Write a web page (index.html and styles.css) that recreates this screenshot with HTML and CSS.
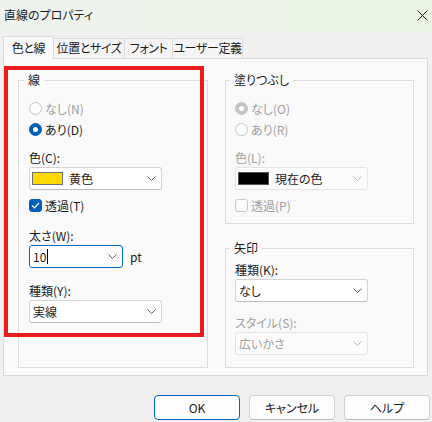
FILE: index.html
```html
<!DOCTYPE html>
<html lang="ja">
<head>
    <meta charset="utf-8">
    <title>直線のプロパティ</title>
    <link rel="stylesheet" href="styles.css">
</head>
<body>
    <div class="titlebar">
        <span class="title">直線のプロパティ</span>
        <span class="close">
            <svg width="11" height="11" viewBox="0 0 11 11"><path d="M0.5 0.5L10.5 10.5M10.5 0.5L0.5 10.5" stroke="#1c1c1c" stroke-width="1" fill="none"/></svg>
        </span>
    </div>

    <div class="tabs">
        <div class="tab active">色と線</div>
        <div class="tab tab-pos">位置とサイズ</div>
        <div class="tab tab-font">フォント</div>
        <div class="tab tab-user">ユーザー定義</div>
    </div>

    <div class="panel">
        <fieldset class="group group-line">
            <legend>線</legend>
            <div class="radio dim"><span class="circle"></span>なし(N)</div>
            <div class="radio"><span class="circle on"></span>あり(D)</div>

            <div class="field-label first">色(C):</div>
            <div class="select">
                <span class="swatch yellow"></span>
                <span class="value">黄色</span>
                <svg class="chevron" width="9" height="5" viewBox="0 0 9 5"><path d="M0.5 0.5L4.5 4.5L8.5 0.5" fill="none" stroke="#5c5c5c"/></svg>
            </div>
            <div class="check"><span class="box on"><svg width="9" height="7" viewBox="0 0 9 7"><path d="M1 3.5L3.4 5.8L8 1" fill="none" stroke="#fff" stroke-width="1.2"/></svg></span>透過(T)</div>

            <div class="field-label gap">太さ(W):</div>
            <div class="width-row">
                <div class="select combo focus">
                    <span class="value">10</span><span class="caret"></span>
                    <svg class="chevron" width="9" height="5" viewBox="0 0 9 5"><path d="M0.5 0.5L4.5 4.5L8.5 0.5" fill="none" stroke="#5c5c5c"/></svg>
                </div>
                <span class="unit">pt</span>
            </div>

            <div class="field-label gap">種類(Y):</div>
            <div class="select">
                <span class="value">実線</span>
                <svg class="chevron" width="9" height="5" viewBox="0 0 9 5"><path d="M0.5 0.5L4.5 4.5L8.5 0.5" fill="none" stroke="#5c5c5c"/></svg>
            </div>
        </fieldset>

        <div class="right-col">
            <fieldset class="group group-fill">
                <legend>塗りつぶし</legend>
                <div class="radio dim"><span class="circle on off"></span>なし(O)</div>
                <div class="radio dim"><span class="circle off"></span>あり(R)</div>

                <div class="field-label first dim">色(L):</div>
                <div class="select disabled">
                    <span class="swatch black"></span>
                    <span class="value dark">現在の色</span>
                    <svg class="chevron" width="9" height="5" viewBox="0 0 9 5"><path d="M0.5 0.5L4.5 4.5L8.5 0.5" fill="none" stroke="#b8b8b8"/></svg>
                </div>
                <div class="check dim"><span class="box off"></span>透過(P)</div>
            </fieldset>

            <fieldset class="group group-arrow">
                <legend>矢印</legend>
                <div class="field-label">種類(K):</div>
                <div class="select">
                    <span class="value">なし</span>
                    <svg class="chevron" width="9" height="5" viewBox="0 0 9 5"><path d="M0.5 0.5L4.5 4.5L8.5 0.5" fill="none" stroke="#5c5c5c"/></svg>
                </div>
                <div class="field-label gap-small dim">スタイル(S):</div>
                <div class="select disabled">
                    <span class="value">広いかさ</span>
                    <svg class="chevron" width="9" height="5" viewBox="0 0 9 5"><path d="M0.5 0.5L4.5 4.5L8.5 0.5" fill="none" stroke="#b8b8b8"/></svg>
                </div>
            </fieldset>
        </div>
    </div>

    <div class="buttons">
        <button class="default">OK</button>
        <button>キャンセル</button>
        <button>ヘルプ</button>
    </div>

    <!-- highlight around the line settings -->
    <div class="highlight"></div>
</body>
</html>
```

FILE: styles.css
```css
* {
    box-sizing: border-box;
}

html,
body {
    margin: 0;
}

body {
    position: relative;
    width: 432px;
    height: 422px;
    overflow: hidden;
    background: #f0f0f0;
    font-family: "Noto Sans CJK JP", sans-serif;
    font-size: 12px;
    font-feature-settings: "palt";
    color: #1b1b1b;
}

.titlebar {
    height: 32px;
    display: flex;
    align-items: center;
    justify-content: space-between;
    padding: 0 4px 3px 4px;
    background: linear-gradient(90deg, #eff2ee, #e9f5e2);
}

.close {
    display: flex;
    margin-top: 1px;
}

/* tab strip */
.tabs {
    display: flex;
    align-items: flex-end;
    height: 26px;
    padding-left: 3px;
}

.tab {
    position: relative;
    height: 20px;
    line-height: 18px;
    text-align: center;
    white-space: nowrap;
    letter-spacing: -0.4px;
    background: #f4f4f4;
    border: 1px solid #dcdcdc;
    border-bottom: none;
    margin-left: -1px;
}

.tab.active {
    margin-left: 0;
    width: 51px;
    height: 23px;
    line-height: 22px;
    margin-bottom: -1px;
    background: #f9f9f9;
    z-index: 1;
}

.tab-pos {
    width: 72px;
}

.tab-font {
    width: 49px;
}

.tab-user {
    width: 71px;
}

.panel {
    height: 318px;
    margin: 0 4px 0 3px;
    background: #f9f9f9;
    border: 1px solid #dadada;
    padding: 13px 0 0 14px;
    display: grid;
    grid-template-columns: 190px 189px;
    column-gap: 17px;
    align-items: start;
}

/* group boxes */
.group {
    margin: 0;
    min-width: 0;
    border: 1px solid #dcdcdc;
    padding: 10px 10px 0;
}

.group legend {
    padding: 0 4px;
    margin-left: -5px;
    line-height: 16px;
}

.group-line {
    height: 296px;
}

.right-col {
    display: flex;
    flex-direction: column;
}

.group-fill {
    height: 152px;
    padding-left: 9px;
}

.group-arrow {
    height: 128px;
    margin-top: 16px;
    padding: 6px 9px 0;
}

.dim {
    color: #a0a0a0;
}

.radio,
.check {
    display: flex;
    align-items: center;
    gap: 3px;
}

.radio {
    height: 21px;
}

.circle {
    width: 13px;
    height: 13px;
    border-radius: 50%;
    border: 1px solid #c3c3c3;
    background: #fdfdfd;
    display: flex;
    align-items: center;
    justify-content: center;
}

.circle.on {
    background: #005fb8;
    border-color: #005fb8;
}

.circle.on::after {
    content: "";
    width: 5px;
    height: 5px;
    border-radius: 50%;
    background: #fff;
}

.circle.off {
    border-color: #c8c8c8;
}

.circle.on.off {
    background: #c5c5c5;
    border-color: #c5c5c5;
}

.check {
    height: 16px;
    margin-top: 7px;
}

.box {
    width: 13px;
    height: 13px;
    border-radius: 3px;
    border: 1px solid #c8c8c8;
    background: #fdfdfd;
    display: flex;
    align-items: center;
    justify-content: center;
}

.box.on {
    background: #005fb8;
    border-color: #005fb8;
}

.field-label {
    line-height: 16px;
    margin-bottom: 1px;
}

.field-label.first {
    margin-top: 10px;
}

.field-label.gap {
    margin-top: 15px;
}

.field-label.gap-small {
    margin-top: 13px;
}

/* drop-down lists */
.select {
    width: 133px;
    height: 23px;
    display: flex;
    align-items: center;
    padding-left: 3px;
    background: #fff;
    border: 1px solid #d4d4d4;
    border-bottom-color: #bdbdbd;
    border-radius: 3px;
}

.select .chevron {
    margin-left: auto;
    margin-right: 5px;
}

.select.disabled {
    background: #fbfbfb;
    border-color: #e4e4e4;
    color: #a0a0a0;
}

.value.dark {
    color: #1b1b1b;
}

.swatch {
    width: 31px;
    height: 13px;
    margin-left: -1px;
    margin-right: 6px;
    border: 1px solid #6e6e6e;
}

.swatch.yellow {
    background: #ffd800;
}

.swatch.black {
    background: #000;
    border-color: #555;
}

.width-row {
    display: flex;
    align-items: center;
    gap: 7px;
}

.combo {
    width: 94px;
}

.combo.focus {
    border-color: #0067c0;
}

.caret {
    width: 1px;
    height: 15px;
    margin-left: 1px;
    background: #000;
}

.buttons {
    display: flex;
    justify-content: flex-end;
    gap: 9px;
    margin-top: 19px;
    padding-right: 2px;
}

button {
    width: 86px;
    height: 25px;
    font-family: inherit;
    font-size: 12px;
    font-feature-settings: "palt";
    color: #1b1b1b;
    background: #fdfdfd;
    border: 1px solid #d0d0d0;
    border-bottom-color: #b8b8b8;
    border-radius: 4px;
    padding: 0;
}

button.default {
    border-color: #0067c0;
}

.highlight {
    position: absolute;
    left: 4px;
    top: 66px;
    width: 200px;
    height: 271px;
    border: 4px solid #e61c1f;
}
```
